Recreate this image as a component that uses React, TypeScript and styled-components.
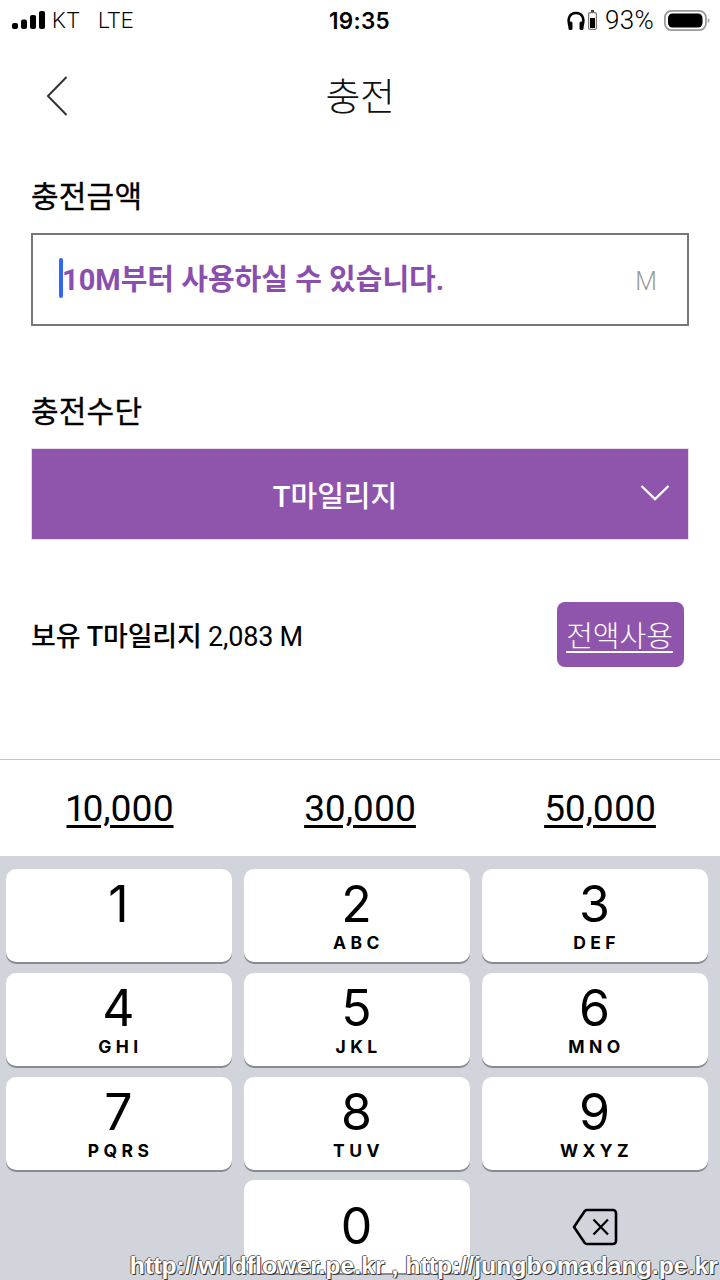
import React from 'react'
import styled, { createGlobalStyle } from 'styled-components'

const GlobalStyle = createGlobalStyle`
  html, body {
    margin: 0;
    padding: 0;
    background: #fff;
  }
  * {
    box-sizing: border-box;
  }
`

const FONT = `Roboto, "Noto Sans CJK KR", sans-serif`

const Page = styled.div`
  position: relative;
  width: 720px;
  height: 1280px;
  overflow: hidden;
  display: flex;
  flex-direction: column;
  font-family: ${FONT};
  color: #000;
`

const StatusBar = styled.div`
  height: 40px;
  padding: 0 10px 0 12px;
  display: grid;
  grid-template-columns: 1fr auto 1fr;
  align-items: center;
  font-family: Inter, sans-serif;
  font-size: 21px;
`

const StatusLeft = styled.div`
  display: flex;
  align-items: center;
  gap: 7px;
  letter-spacing: 0.5px;
  font-family: Roboto, sans-serif;
  font-size: 22px;
  font-weight: 300;
`

const Lte = styled.span`
  margin-left: 11px;
`

const Clock = styled.div`
  font-weight: 600;
  font-size: 22.500px;
  letter-spacing: 0.3px;
  margin-left: -3px;
`

const StatusRight = styled.div`
  display: flex;
  align-items: center;
  justify-content: flex-end;
  gap: 3px;
  font-size: 26px;
  font-family: Roboto, sans-serif;
  font-weight: 300;
  letter-spacing: 0.3px;
`

const Percent = styled.span`
  margin: 0 7px 0 5px;
`

const NavBar = styled.div`
  position: relative;
  height: 112px;
  display: flex;
  align-items: center;
  justify-content: center;
  padding-top: 2px;
`

const BackIcon = styled.svg`
  position: absolute;
  left: 45px;
  top: 35px;
`

const NavTitle = styled.h1`
  margin: 0;
  font-size: 38px;
  font-weight: 300;
  line-height: 50px;
  color: #111;
  letter-spacing: -0.5px;
`

const Content = styled.div`
  height: 607px;
  padding: 0 31px;
  display: flex;
  flex-direction: column;
`

const SectionLabel = styled.div<{ $top: number }>`
  margin-top: ${p => p.$top}px;
  font-size: 30px;
  font-weight: 400;
  line-height: 44px;
  height: 44px;
  letter-spacing: 0.2px;
  -webkit-text-stroke: 0.3px #000;
`

const AmountField = styled.div`
  margin-top: 14px;
  height: 93px;
  border: 2px solid #777;
  padding: 0 30px 0 26px;
  display: flex;
  align-items: center;
  justify-content: space-between;
`

const Placeholder = styled.div`
  position: relative;
  font-size: 29px;
  font-weight: 700;
  color: #8a4fae;
  letter-spacing: 0;
  padding-left: 3px;
  line-height: 40px;
`

const Caret = styled.span`
  position: absolute;
  left: 0;
  top: -2px;
  width: 4px;
  height: 40px;
  border-radius: 2px;
  background: #3366f2;
`

const Unit = styled.div`
  font-size: 25px;
  font-weight: 300;
  color: #9b9b9b;
  margin-top: 3px;
`

const MethodSelect = styled.div`
  position: relative;
  margin-top: 14px;
  height: 92px;
  background: #8f54ac;
  border: 1px solid #e6dceb;
  display: flex;
  align-items: center;
  justify-content: center;
  padding-right: 50px;
  color: #fff;
  font-size: 29px;
  font-weight: 500;
`

const Chevron = styled.svg`
  position: absolute;
  right: 18px;
  top: 35px;
`

const BalanceRow = styled.div`
  margin-top: 61px;
  height: 66px;
  padding-right: 5px;
  display: flex;
  align-items: center;
  justify-content: space-between;
`

const BalanceText = styled.div`
  font-size: 27px;
  font-weight: 400;
  letter-spacing: -0.2px;
`

const BalanceName = styled.span`
  font-weight: 500;
`

const UseAllButton = styled.div`
  width: 127px;
  height: 65px;
  border-radius: 8px;
  background: #8f54ac;
  color: #fff;
  display: flex;
  align-items: center;
  justify-content: center;
  font-size: 29px;
  font-weight: 300;
  text-decoration: underline;
  text-underline-offset: 4px;
  padding-right: 2px;
`

const QuickRow = styled.div`
  height: 97px;
  border-top: 1px solid #c4c4c4;
  display: grid;
  grid-template-columns: repeat(3, 1fr);
  align-items: center;
  justify-items: center;
`

const QuickAmount = styled.div`
  font-size: 37px;
  font-weight: 400;
  font-variant-numeric: proportional-nums;
  text-decoration: underline;
  text-decoration-thickness: 2.500px;
  text-underline-offset: 4px;
  letter-spacing: -0.4px;
`

const Keyboard = styled.div`
  flex: 1;
  background: #d1d4db;
  padding: 13px 12px 0 6px;
  display: grid;
  grid-template-columns: repeat(3, 226px);
  grid-auto-rows: 93px;
  column-gap: 12px;
  row-gap: 10.8px;
  font-family: Inter, sans-serif;
`

const Key = styled.div<{ $solo?: boolean }>`
  background: #fff;
  border-radius: 10px;
  box-shadow: 0 2px 0 #868a91;
  display: flex;
  flex-direction: column;
  align-items: center;
  padding-top: ${p => (p.$solo ? 18 : 7)}px;
`

const BlankKey = styled.div``

const IconKey = styled.div`
  display: flex;
  align-items: center;
  justify-content: center;
`

const Digit = styled.div`
  font-size: 50px;
  line-height: 56px;
  height: 56px;
  font-weight: 400;
  margin-left: -1px;
`

const Letters = styled.div`
  font-size: 17.500px;
  line-height: 20px;
  font-weight: 700;
  letter-spacing: 4.400px;
  margin-top: 1px;
  padding-left: 3px;
`

const Watermark = styled.div`
  position: absolute;
  right: 2px;
  bottom: 0;
  font-family: "Liberation Sans", sans-serif;
  font-size: 24.800px;
  line-height: 28px;
  font-weight: 700;
  color: #fff;
  white-space: nowrap;
  text-shadow: 1px 1px 0 #333, -1px 0 0 #555, 0 -1px 0 #777;
`

const keys = [
  ['1', ''],
  ['2', 'ABC'],
  ['3', 'DEF'],
  ['4', 'GHI'],
  ['5', 'JKL'],
  ['6', 'MNO'],
  ['7', 'PQRS'],
  ['8', 'TUV'],
  ['9', 'WXYZ'],
]

export default function App() {
  return (
    <Page>
      <GlobalStyle />
      <StatusBar>
        <StatusLeft>
          <svg width="33" height="18" viewBox="0 0 33 18" fill="#000">
            <rect x="0" y="12" width="6" height="6" rx="2" />
            <rect x="9" y="8.500" width="6" height="9.500" rx="2" />
            <rect x="18" y="4" width="6" height="14" rx="2" />
            <rect x="27" y="0" width="6" height="18" rx="2" />
          </svg>
          <span>KT</span>
          <Lte>LTE</Lte>
        </StatusLeft>
        <Clock>19:35</Clock>
        <StatusRight>
          <svg width="18" height="19" viewBox="0 0 18 19" fill="none">
            <path d="M3 16C.5 10 1 2 9 2s8.500 8 6 14" stroke="#000" strokeWidth="2.600" />
            <rect x="1.500" y="10.500" width="4" height="8.500" rx="1.500" fill="#000" />
            <rect x="12.500" y="10.500" width="4" height="8.500" rx="1.500" fill="#000" />
          </svg>
          <svg width="9" height="20" viewBox="0 0 9 20" fill="none">
            <rect x="3" y="0" width="3" height="3" fill="#444" />
            <rect x="0.600" y="2.600" width="7.800" height="16.800" rx="1.500" stroke="#777" strokeWidth="1.200" />
            <rect x="2" y="8" width="5" height="10" fill="#000" />
          </svg>
          <Percent>93%</Percent>
          <svg width="46" height="21" viewBox="0 0 46 21" fill="none">
            <rect x="0.900" y="0.900" width="41" height="19.200" rx="6.500" stroke="#999" strokeWidth="1.800" />
            <rect x="4" y="3.500" width="34.500" height="14" rx="4.500" fill="#000" />
            <path d="M43.800 8v5c1-.4 1.600-1.300 1.600-2.500S44.800 8.400 43.800 8z" fill="#999" />
          </svg>
        </StatusRight>
      </StatusBar>

      <NavBar>
        <BackIcon width="24" height="42" viewBox="0 0 24 42" fill="none">
          <path d="M21.500 2 3 21l18.500 19" stroke="#333" strokeWidth="2" />
        </BackIcon>
        <NavTitle>충전</NavTitle>
      </NavBar>

      <Content>
        <SectionLabel $top={23}>충전금액</SectionLabel>
        <AmountField>
          <Placeholder>
            <Caret />
            10M부터 사용하실 수 있습니다.
          </Placeholder>
          <Unit>M</Unit>
        </AmountField>

        <SectionLabel $top={64}>충전수단</SectionLabel>
        <MethodSelect>
          T마일리지
          <Chevron width="30" height="18" viewBox="0 0 30 18" fill="none">
            <path d="M1.500 2 15 15 28.500 2" stroke="#fff" strokeWidth="2.400" />
          </Chevron>
        </MethodSelect>

        <BalanceRow>
          <BalanceText>
            <BalanceName>보유 T마일리지</BalanceName> 2,083 M
          </BalanceText>
          <UseAllButton>전액사용</UseAllButton>
        </BalanceRow>
      </Content>

      <QuickRow>
        <QuickAmount>10,000</QuickAmount>
        <QuickAmount>30,000</QuickAmount>
        <QuickAmount>50,000</QuickAmount>
      </QuickRow>

      <Keyboard>
        {keys.map(([digit, letters]) => (
          <Key key={digit}>
            <Digit>{digit}</Digit>
            {letters && <Letters>{letters}</Letters>}
          </Key>
        ))}
        <BlankKey />
        <Key $solo>
          <Digit>0</Digit>
        </Key>
        <IconKey>
          <svg width="46" height="38" viewBox="0 0 46 38" fill="none" stroke="#000" strokeWidth="2.600">
            <path d="M15 2h26a3 3 0 0 1 3 3v28a3 3 0 0 1-3 3H15a3 3 0 0 1-2.200-1L2 19 12.800 3a3 3 0 0 1 2.200-1z" strokeLinejoin="round" />
            <path d="M21.500 11.500 36 26.500M36 11.500 21.500 26.500" strokeWidth="2.200" />
          </svg>
        </IconKey>
      </Keyboard>

      <Watermark>http://wildflower.pe.kr , http://jungbomadang.pe.kr</Watermark>
    </Page>
  )
}
